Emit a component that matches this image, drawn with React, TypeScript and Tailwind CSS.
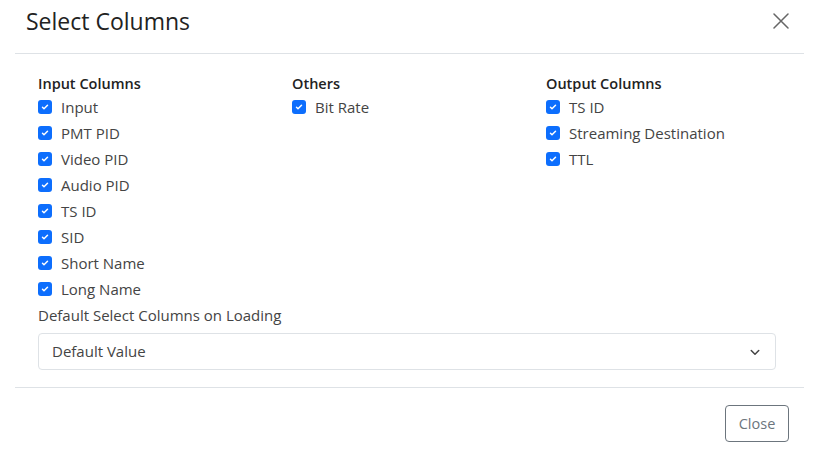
import React, { useState } from 'react';

const inputCols = ['Input', 'PMT PID', 'Video PID', 'Audio PID', 'TS ID', 'SID', 'Short Name', 'Long Name'];
const otherCols = ['Bit Rate'];
const outputCols = ['TS ID', 'Streaming Destination', 'TTL'];

function Check({ label }: { label: string }) {
  const [on, setOn] = useState(true);
  return (
    <label className="flex items-center h-[26px] cursor-pointer" onClick={() => setOn(!on)}>
      <span
        className={`w-[14px] h-[14px] rounded-[3px] flex items-center justify-center ${
          on ? 'bg-[#0d6efd]' : 'bg-white border border-[#adb5bd]'
        }`}
      >
        {on && (
          <svg width="10" height="10" viewBox="0 0 20 20" fill="none">
            <path d="M5 10.5l3 3 7-7" stroke="white" strokeWidth="3" strokeLinecap="round" strokeLinejoin="round" />
          </svg>
        )}
      </span>
      <span className="ml-[9px] text-[15px] text-[#444]">{label}</span>
    </label>
  );
}

function Group({ title, items }: { title: string; items: string[] }) {
  return (
    <div className="w-[254px] shrink-0">
      <div className="h-[20px] flex items-center text-[14.5px] font-semibold text-[#222]">{title}</div>
      {items.map((i) => (
        <Check key={i} label={i} />
      ))}
    </div>
  );
}

export default function App() {
  return (
    <div className="w-[819px] h-[451px] bg-white px-[15px]" style={{ fontFamily: '"Open Sans", "Noto Sans", sans-serif' }}>
      <div className="h-[54px] flex items-start justify-between border-b border-[#dee2e6] pl-[11px] pr-[12px] pt-[5px]">
        <h1 className="text-[23px] leading-[32px] text-[#222] font-normal">Select Columns</h1>
        <button className="text-[#666] mt-[8px] mr-[3px]">
          <svg width="16" height="16" viewBox="0 0 16 16" stroke="currentColor" strokeWidth="1.5" strokeLinecap="round">
            <path d="M1 1l14 14M15 1L1 15" />
          </svg>
        </button>
      </div>
      <div className="px-[23px] pt-[20px] pb-[17px] border-b border-[#dee2e6]">
        <div className="flex">
          <Group title="Input Columns" items={inputCols} />
          <Group title="Others" items={otherCols} />
          <Group title="Output Columns" items={outputCols} />
        </div>
        <div className="h-[26px] flex items-center text-[15px] text-[#444]">Default Select Columns on Loading</div>
        <div className="mt-[5px] w-[738px] h-[37px] border border-[#dee2e6] rounded-[4px] flex items-center justify-between pl-[13px] pr-[14px]">
          <span className="text-[15px] text-[#444]">Default Value</span>
          <svg width="12" height="12" viewBox="0 0 16 16" fill="none" stroke="#444" strokeWidth="2" strokeLinecap="round" strokeLinejoin="round">
            <path d="M3 6l5 5 5-5" />
          </svg>
        </div>
      </div>
      <div className="flex justify-end pr-[15px] pt-[17px]">
        <button className="w-[64px] h-[37px] border border-[#6c757d] rounded-[4px] text-[14.5px] text-[#6c757d]">Close</button>
      </div>
    </div>
  );
}
